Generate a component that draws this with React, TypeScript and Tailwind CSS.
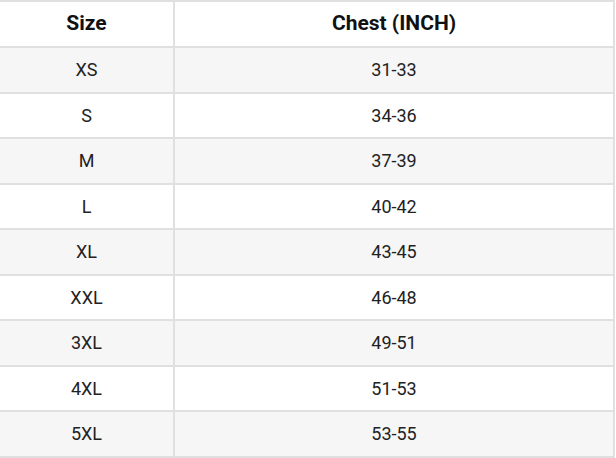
const rows: [string, string][] = [
  ["XS", "31-33"],
  ["S", "34-36"],
  ["M", "37-39"],
  ["L", "40-42"],
  ["XL", "43-45"],
  ["XXL", "46-48"],
  ["3XL", "49-51"],
  ["4XL", "51-53"],
  ["5XL", "53-55"],
];

export default function App() {
  return (
    <div className="w-[616px] h-[458px] bg-white font-['Roboto',sans-serif] text-[18px] text-[#222]">
      <table className="w-[615px] border-collapse">
        <thead>
          <tr className="h-[46px] bg-white text-[21px] text-[#111]">
            <th className="w-[174px] border-2 border-l-0 border-[#e0e0e0] font-bold">Size</th>
            <th className="border-2 border-[#e0e0e0] font-bold">Chest (INCH)</th>
          </tr>
        </thead>
        <tbody>
          {rows.map(([size, chest], i) => (
            <tr key={size} className={`h-[45.5px] ${i % 2 === 0 ? "bg-[#f6f6f6]" : "bg-white"}`}>
              <td className="border-2 border-l-0 border-[#e0e0e0] text-center">{size}</td>
              <td className="border-2 border-[#e0e0e0] text-center">{chest}</td>
            </tr>
          ))}
        </tbody>
      </table>
    </div>
  );
}
